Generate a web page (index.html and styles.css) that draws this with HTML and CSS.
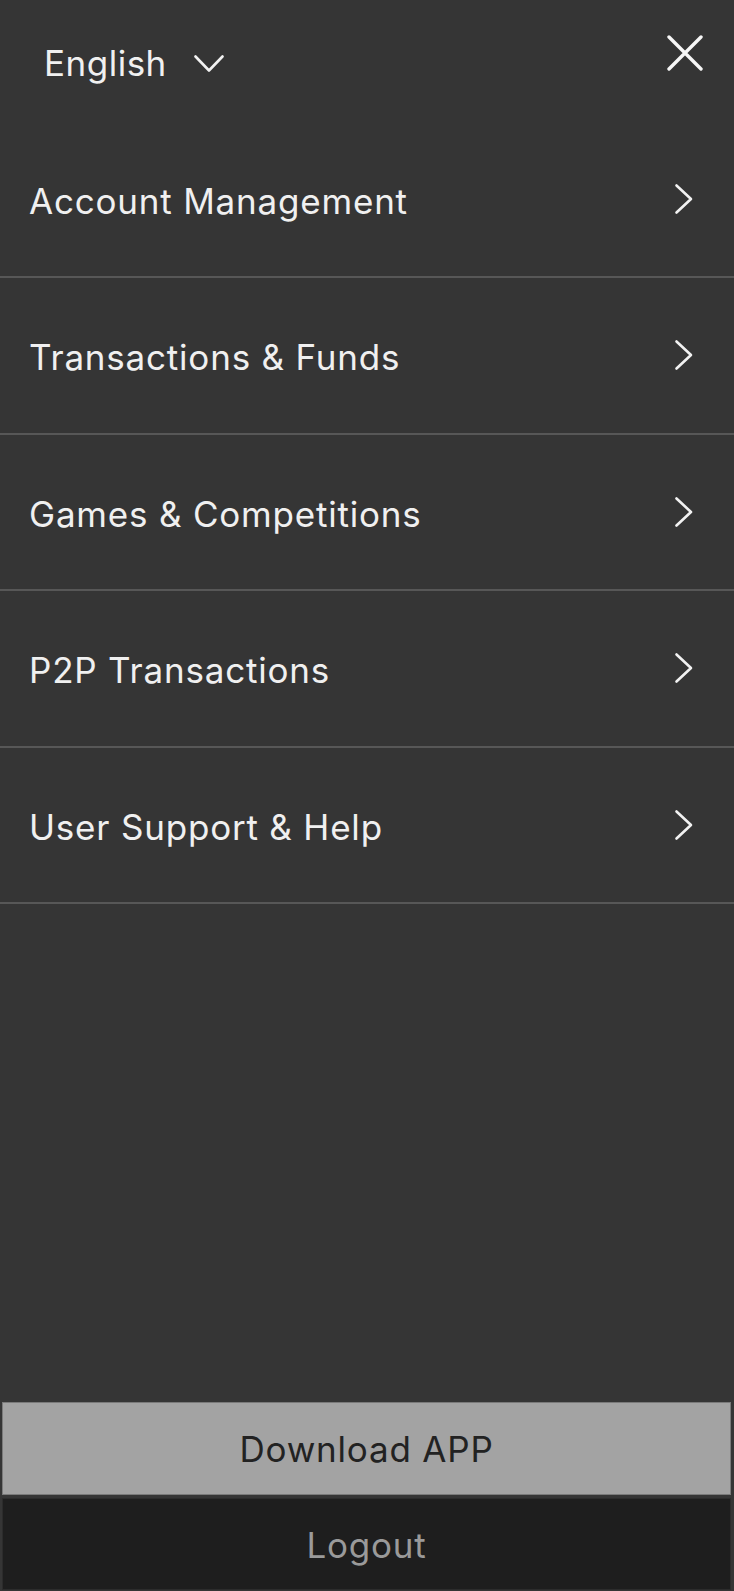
FILE: index.html
```html
<!DOCTYPE html>
<html lang="en">
<head>
<meta charset="utf-8">
<title>Menu</title>
<link rel="stylesheet" href="styles.css">
</head>
<body>
<div class="drawer">
  <header class="top">
    <div class="lang">
      <span class="lang-label">English</span>
      <svg class="lang-caret" width="30" height="18" viewBox="0 0 30 18"><polyline points="1.5,1.5 15,15.5 28.5,1.5" fill="none" stroke="#f2f2f2" stroke-width="2.6" stroke-linecap="round" stroke-linejoin="round"/></svg>
    </div>
    <svg class="close" width="36" height="36" viewBox="0 0 36 36"><path d="M2 2 L34 34 M34 2 L2 34" fill="none" stroke="#f7f7f7" stroke-width="3.4" stroke-linecap="round"/></svg>
  </header>
  <nav class="menu">
    <a class="item"><span>Account Management</span><svg class="chev" width="20" height="32" viewBox="0 0 20 32"><polyline points="2.5,2.5 17,16 2.5,29.5" fill="none" stroke="#f2f2f2" stroke-width="2.6" stroke-linecap="round" stroke-linejoin="round"/></svg></a>
    <a class="item"><span>Transactions &amp; Funds</span><svg class="chev" width="20" height="32" viewBox="0 0 20 32"><polyline points="2.5,2.5 17,16 2.5,29.5" fill="none" stroke="#f2f2f2" stroke-width="2.6" stroke-linecap="round" stroke-linejoin="round"/></svg></a>
    <a class="item"><span>Games &amp; Competitions</span><svg class="chev" width="20" height="32" viewBox="0 0 20 32"><polyline points="2.5,2.5 17,16 2.5,29.5" fill="none" stroke="#f2f2f2" stroke-width="2.6" stroke-linecap="round" stroke-linejoin="round"/></svg></a>
    <a class="item"><span>P2P Transactions</span><svg class="chev" width="20" height="32" viewBox="0 0 20 32"><polyline points="2.5,2.5 17,16 2.5,29.5" fill="none" stroke="#f2f2f2" stroke-width="2.6" stroke-linecap="round" stroke-linejoin="round"/></svg></a>
    <a class="item"><span>User Support &amp; Help</span><svg class="chev" width="20" height="32" viewBox="0 0 20 32"><polyline points="2.5,2.5 17,16 2.5,29.5" fill="none" stroke="#f2f2f2" stroke-width="2.6" stroke-linecap="round" stroke-linejoin="round"/></svg></a>
  </nav>
  <div class="spacer"></div>
  <footer class="actions">
    <button class="btn btn-download">Download APP</button>
    <button class="btn btn-logout">Logout</button>
  </footer>
</div>
</body>
</html>
```

FILE: styles.css
```css
html, body {
  margin: 0;
  padding: 0;
  background: #353535;
}
body {
  font-family: Inter, "Noto Sans", "Liberation Sans", sans-serif;
  color: #f0f0f0;
  letter-spacing: 0.8px;
}
.drawer {
  height: 1591px;
  display: flex;
  flex-direction: column;
  background: #353535;
}
.top {
  height: 121.5px;
  display: flex;
  align-items: flex-start;
  justify-content: space-between;
  box-sizing: border-box;
  padding: 0 31px 0 44px;
}
.lang {
  display: flex;
  align-items: center;
  gap: 27px;
  margin-top: 38px;
}
.lang-label {
  font-size: 35px;
  line-height: 50px;
  letter-spacing: 0.5px;
}
.lang-caret {
  display: block;
  margin-top: 2px;
}
.close {
  display: block;
  margin-top: 35px;
}
.menu {
  display: flex;
  flex-direction: column;
}
.item {
  height: 150.5px;
  border-bottom: 2px solid #575757;
  display: flex;
  align-items: center;
  justify-content: space-between;
  padding: 4px 40px 0 29px;
  box-sizing: content-box;
  font-size: 35px;
  line-height: 44px;
  color: #f0f0f0;
}
.chev {
  display: block;
  margin-top: -4px;
}
.spacer {
  flex: 1;
}
.actions {
  display: flex;
  flex-direction: column;
  gap: 3px;
  padding: 0 3px 1px 2px;
}
.btn {
  display: block;
  width: 100%;
  margin: 0;
  font-family: inherit;
  font-size: 35px;
  letter-spacing: 0.8px;
  text-align: center;
  box-sizing: border-box;
  cursor: pointer;
}
.btn-download {
  height: 93px;
  background: #a3a3a3;
  color: #222222;
  border: 1px solid #7a7a7a;
  padding-top: 2px;
}
.btn-logout {
  height: 92px;
  background: #1e1e1e;
  color: #9a9a9a;
  border: 1px solid #2c2c2c;
  padding-top: 2px;
}
```
